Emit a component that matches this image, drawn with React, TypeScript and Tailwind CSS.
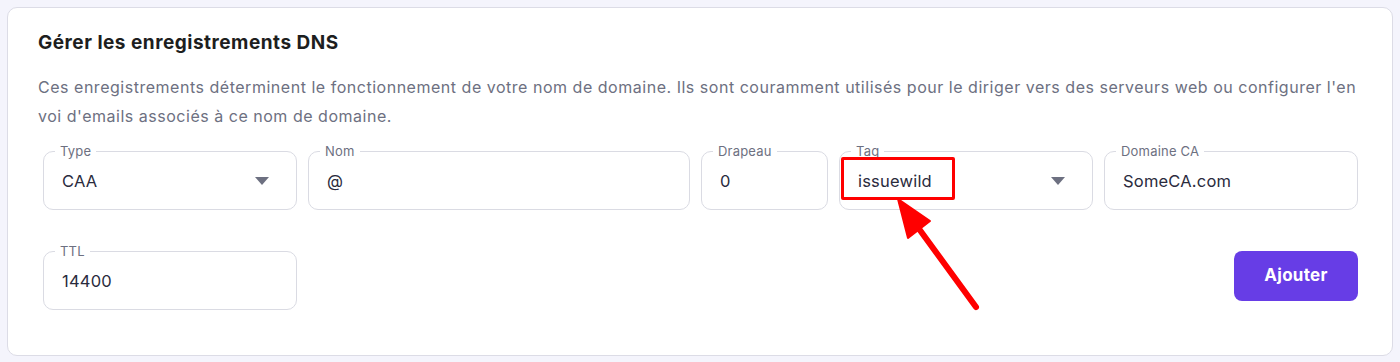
import React from "react";

function Caret() {
  return (
    <svg width="14" height="8" viewBox="0 0 14 8" className="shrink-0">
      <path d="M0 0 H14 L7 8 Z" fill="#6d7081" />
    </svg>
  );
}

function Field({
  label,
  value,
  select,
  highlight,
}: {
  label: string;
  value: string;
  select?: boolean;
  highlight?: boolean;
}) {
  return (
    <div className="relative h-[59px] rounded-[10px] border border-[#dadbe3] bg-white flex items-center pl-[18px] pr-[27px]">
      <span className="absolute -top-[10px] left-[11px] bg-white px-[5px] text-[13px] leading-[18px] text-[#6d7081] tracking-[0.2px]">
        {label}
      </span>
      <span className="flex-1 text-[16.5px] text-[#2a2b3d] pt-[1px] tracking-[0.2px]">{value}</span>
      {select && <Caret />}
      {highlight && (
        <span className="absolute left-[1px] top-[5px] w-[114px] h-[43px] border-[3px] border-[#ff0000] rounded-[2px]" />
      )}
    </div>
  );
}

export default function App() {
  return (
    <div
      className="w-[1400px] h-[362px] bg-[#f4f4fc] p-[7px] relative"
      style={{ fontFamily: "Inter, 'Noto Sans', sans-serif" }}
    >
      <div className="w-[1386px] h-[349px] bg-white border border-[#dcdce6] rounded-[10px] pl-[30px] pt-[23px]">
        <h2 className="text-[19px] font-bold text-[#1d1e20] leading-[24px] tracking-[0.5px]">
          Gérer les enregistrements DNS
        </h2>
        <p className="mt-[18px] text-[16px] leading-[29px] text-[#6d7081] whitespace-nowrap tracking-[0.52px]">
          Ces enregistrements déterminent le fonctionnement de votre nom de domaine. Ils sont couramment utilisés pour le
          diriger vers des serveurs web ou configurer l'en
          <br />
          voi d'emails associés à ce nom de domaine.
        </p>
        <div className="pl-[5px] mt-[20px]">
          <div className="grid grid-cols-[254px_382px_127px_254px_254px] gap-x-[11px]">
            <Field label="Type" value="CAA" select />
            <Field label="Nom" value="@" />
            <Field label="Drapeau" value="0" />
            <Field label="Tag" value="issuewild" select highlight />
            <Field label="Domaine CA" value="SomeCA.com" />
          </div>
          <div className="mt-[41px] flex items-start w-[1315px]">
            <div className="w-[254px]">
              <Field label="TTL" value="14400" />
            </div>
            <div className="flex-1" />
            <button className="w-[124px] h-[50px] rounded-[8px] bg-[#673de6] text-white text-[17px] font-bold tracking-[0.3px]">
              Ajouter
            </button>
          </div>
        </div>
      </div>
      <svg
        className="absolute left-0 top-0 pointer-events-none"
        width="1400"
        height="362"
        viewBox="0 0 1400 362"
      >
        <line x1="976" y1="307" x2="914" y2="222" stroke="#ff0000" strokeWidth="6" strokeLinecap="round" />
        <path d="M898 199 L930 221 L908 238 Z" fill="#ff0000" stroke="#ff0000" strokeWidth="2" strokeLinejoin="round" />
      </svg>
    </div>
  );
}
